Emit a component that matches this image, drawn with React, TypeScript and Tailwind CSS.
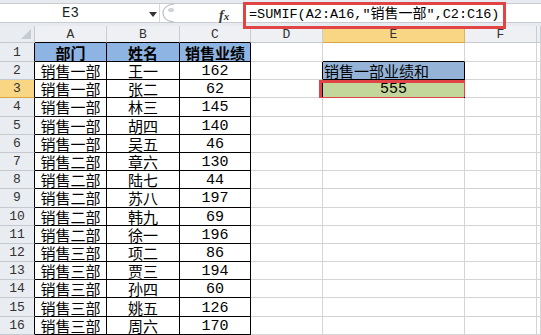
import React from 'react';

const rows: string[][] = [
  ['部门', '姓名', '销售业绩'],
  ['销售一部', '王一', '162'],
  ['销售一部', '张二', '62'],
  ['销售一部', '林三', '145'],
  ['销售一部', '胡四', '140'],
  ['销售一部', '吴五', '46'],
  ['销售二部', '章六', '130'],
  ['销售二部', '陆七', '44'],
  ['销售二部', '苏八', '197'],
  ['销售二部', '韩九', '69'],
  ['销售二部', '徐一', '196'],
  ['销售三部', '项二', '86'],
  ['销售三部', '贾三', '194'],
  ['销售三部', '孙四', '60'],
  ['销售三部', '姚五', '126'],
  ['销售三部', '周六', '170'],
];

const letters = ['A', 'B', 'C', 'D', 'E', 'F', ''];

const cjk = "font-['Noto_Sans_CJK_SC',sans-serif]";
const mono = "font-['Liberation_Mono','Noto_Sans_CJK_SC',monospace]";

function Cell({ r, c }: { r: number; c: number }) {
  const inTable = c <= 2;
  const blackR = inTable || ((c === 3 || c === 4) && (r === 2 || r === 3));
  const blackB = inTable || (c === 4 && r <= 3);
  let bg = 'bg-white';
  if (inTable && r === 1) bg = 'bg-[#8db4e2]';
  if (c === 4 && r === 2) bg = 'bg-[#95b3d7]';
  if (c === 4 && r === 3) bg = 'bg-[#c4d79b]';
  const h = r === 1 ? 'h-[19px]' : 'h-[18.2px]';

  let content: React.ReactNode = null;
  if (inTable) {
    const v = rows[r - 1][c];
    const isNum = c === 2 && r > 1;
    content = (
      <span
        className={`${isNum ? `${mono} translate-y-[1px]` : cjk} text-[15px] leading-none text-black ${r === 1 ? 'font-bold' : ''}`}
      >
        {v}
      </span>
    );
  }
  if (c === 4 && r === 2) {
    content = <span className={`${cjk} text-[15px] leading-none text-black`}>销售一部业绩和</span>;
  }
  if (c === 4 && r === 3) {
    content = <span className={`${mono} translate-y-[1px] text-[15px] leading-none text-black`}>555</span>;
  }

  return (
    <div
      className={`relative ${h} ${bg} border-r border-b ${blackR ? 'border-r-black' : 'border-r-[#d4d4d4]'} ${blackB ? 'border-b-black' : 'border-b-[#d4d4d4]'} flex items-center ${c === 4 && r === 2 ? 'justify-start pl-px' : 'justify-center'}`}
    >
      {content}
      {c === 4 && r === 3 && (
        <>
          <div className="absolute top-[0px] left-[-4px] right-[-3px] bottom-[-3px] border-[3px] border-[#e04444] pointer-events-none" />
          <div className="absolute right-[-4px] bottom-[-4px] w-[4px] h-[4px] bg-black" />
        </>
      )}
    </div>
  );
}

export default function App() {
  return (
    <div className="relative w-[541px] h-[335px] overflow-hidden bg-white">
      {/* formula bar */}
      <div className="h-[26px] bg-[#e7eaee] pt-[3px] pb-[3px]">
        <div className="h-[20px] flex bg-white border-y border-[#c8ccd2]">
          <div className="w-[160px] relative flex items-center border-r border-[#d6d9de]">
            <span className={`${mono} text-[14px] text-[#222] absolute left-[62px]`}>E3</span>
            <svg className="absolute left-[149px] top-[8px]" width="8" height="5" viewBox="0 0 8 5">
              <path d="M0 0 L8 0 L4 5 Z" fill="#333" />
            </svg>
          </div>
          <div className="w-[83px] relative">
            <svg className="absolute left-[2px] top-[-1px]" width="18" height="20" viewBox="0 0 18 20">
              <path d="M12 1 C3 2 1 7 1 10 C1 13 3 18 12 19" fill="none" stroke="#b9bec6" strokeWidth="1.2" />
              <ellipse cx="9" cy="7" rx="3" ry="2" fill="#cfd3d8" />
            </svg>
            <span className="absolute left-[59px] top-[1px] font-['Liberation_Serif',serif] italic font-bold text-[14px] text-[#333]">
              f<span className="text-[11px]">x</span>
            </span>
          </div>
          <div className="flex-1 flex items-center pl-[6px]">
            <span className={`${mono} text-[13.5px] leading-none text-black whitespace-nowrap`}>
              =SUMIF(A2:A16,"<span className={`${cjk} text-[14px]`}>销售一部</span>",C2:C16)
            </span>
          </div>
        </div>
      </div>

      {/* red highlight around formula */}
      <div className="absolute left-[243px] top-[2px] w-[263px] h-[27px] border-[3px] border-[#e04444] z-10" />

      {/* sheet grid */}
      <div className="grid grid-cols-[35px_72px_73px_71px_72px_142px_72px_1fr]">
        {/* column header row */}
        <div className="h-[17px] bg-[#e9ecf0] border-r border-b border-[#c5cad1] relative">
          <svg className="absolute right-[3px] bottom-[3px]" width="10" height="10" viewBox="0 0 10 10">
            <path d="M10 0 L10 10 L0 10 Z" fill="#c6cbd2" />
          </svg>
        </div>
        {letters.map((l, i) => (
          <div
            key={l + i}
            className={`h-[17px] border-r border-b flex items-center justify-center ${mono} text-[13px] leading-none text-[#333] ${
              i === 4 ? 'bg-[#f8d683] border-r-[#d9b560] border-b-[#d9a640]' : 'bg-[#eef0f3] border-r-[#c8cdd4]'
            } ${i !== 4 ? (i <= 2 ? 'border-b-black' : 'border-b-[#c5cad1]') : ''}`}
          >
            {l}
          </div>
        ))}

        {rows.map((_, ri) => {
          const r = ri + 1;
          return (
            <React.Fragment key={r}>
              <div
                className={`${r === 1 ? 'h-[19px]' : 'h-[18.2px]'} border-r border-r-black border-b flex items-center justify-center ${mono} text-[13px] leading-none text-[#333] ${
                  r === 3 ? 'bg-[#f8d683] border-b-[#d9a640]' : 'bg-[#e9ecf0] border-b-[#c5cad1]'
                }`}
              >
                {r}
              </div>
              {letters.map((_, c) => (
                <Cell key={c} r={r} c={c} />
              ))}
            </React.Fragment>
          );
        })}
      </div>
    </div>
  );
}
